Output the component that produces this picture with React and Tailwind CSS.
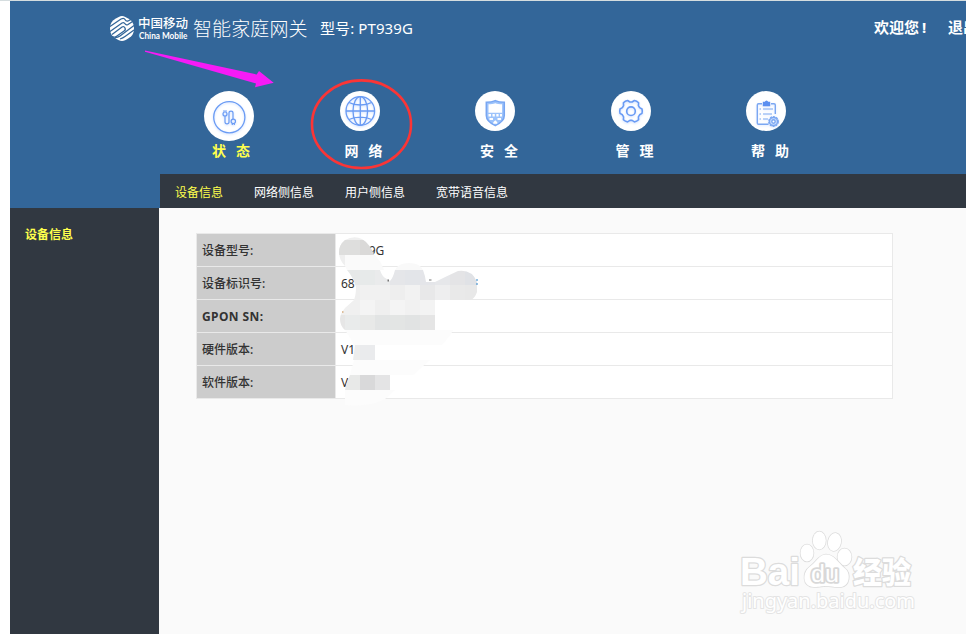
const menus = [
  { name: '状态', icon: CableIcon, active: true },
  { name: '网络', icon: GlobeIcon },
  { name: '安全', icon: ShieldIcon },
  { name: '管理', icon: GearIcon },
  { name: '帮助', icon: ClipboardIcon },
];

const tabs = ['设备信息', '网络侧信息', '用户侧信息', '宽带语音信息'];

const rows = [
  { label: '设备型号:', value: 'PT939G' },
  { label: '设备标识号:', value: '68' },
  { label: 'GPON SN:', value: '' },
  { label: '硬件版本:', value: 'V1' },
  { label: '软件版本:', value: 'V' },
];

// x, y, width, height, colour of each block, relative to the table
const blocks = [
  [148, 36, 15, 15, '#e6e8e8'], [163, 36, 15, 15, '#e7eaea'], [178, 36, 15, 15, '#eaebec'], [193, 36, 15, 15, '#e5e6e9'],
  [208, 36, 15, 15, '#e3e5e9'], [223, 36, 15, 15, '#e4e5e9'], [238, 36, 15, 15, '#e6e7ea'],
  [253, 36, 15, 15, '#e4e4e6'], [268, 36, 15, 15, '#e0e2e6'],
  [148, 51, 15, 15, '#eeeeee'], [163, 51, 30, 15, '#f1f1f1'], [193, 51, 15, 15, '#eeeeee'],
  [208, 51, 15, 15, '#f2f2f2'], [223, 51, 15, 15, '#e8e8e9'], [238, 51, 15, 15, '#eeeeef'],
  [253, 51, 15, 15, '#e9e9e9'], [268, 51, 15, 15, '#e8e8e8'],
  [142, 66, 21, 15, '#f0f0f0'], [163, 66, 15, 15, '#f4f4f4'], [178, 66, 15, 15, '#efefef'],
  [193, 66, 15, 15, '#f4f4f4'], [208, 66, 15, 15, '#f1f1f1'], [223, 66, 15, 15, '#f3f3f3'],
  [142, 81, 6, 15, '#e6e6e6'], [148, 81, 15, 15, '#e9ebeb'], [163, 81, 15, 15, '#e8e9e8'], [178, 81, 15, 15, '#e2e4e4'],
  [193, 81, 15, 15, '#e3e5e4'], [208, 81, 15, 15, '#e1e3e3'], [223, 81, 15, 15, '#e5e5e5'],
];

function CableIcon() {
  return (
    <svg viewBox="0 0 50 50" className="size-[50px] drop-shadow-[0_1px_1px_#cfe0ff]" fill="none" stroke="#6a9bf4">
      <circle cx="25.3" cy="26.3" r="15.6" strokeWidth="1.3" />
      <g strokeWidth="1.2">
        <circle cx="21" cy="23" r="2" />
        <path d="M20 20.8v-1.500M22 20.800v-1.500M21 25v6c0 2.500 4 2.500 4 0v-9c0-2.500 4-2.500 4 0v6M28.300 34v-1.500M30.300 34v-1.500" />
        <circle cx="29.300" cy="30.300" r="2.200" />
      </g>
    </svg>
  );
}

function GlobeIcon() {
  return (
    <svg viewBox="0 0 40 40" className="size-10 drop-shadow-[0_1px_1px_#cfe0ff]" fill="none" stroke="#6a9bf4" strokeWidth="1.3">
      <circle cx="20.3" cy="20" r="14.3" />
      <ellipse cx="20.3" cy="20" rx="7.3" ry="14.3" />
      <path d="M20.300 5.700v28.600M6 20h28.600M9 11.500c6 3.300 16.600 3.300 22.600 0M9 28.500c6-3.300 16.600-3.300 22.600 0" />
    </svg>
  );
}

function ShieldIcon() {
  return (
    <svg viewBox="0 0 40 40" className="size-10" fill="none" stroke="#78a6f2">
      <path d="M20.300 9.600c-2.500 1.200-5.500 1.700-9 1.700v13.300c0 5 4.500 8 9 10 4.500-2 9-5 9-10V11.300c-3.500 0-6.500-.5-9-1.700z" fill="#9dc3fb" strokeWidth="1.500" />
      <path d="M13.500 13.300c2.700 0 4.900-.3 6.800-1 1.900.7 4.100 1 6.800 1v8.500H13.500z" fill="#fff" stroke="none" />
      <path d="M13.500 23h2.500v2.500h-2.500zM17.500 23h2.300v2.500h-2.300zM21.300 23h2.300v2.500h-2.300zM25 23h2v2.500h-2zM14.500 27h3.500v2h-3.500zM22.500 27h3.500v2h-3.500zM18.300 31.300l2-2 2 2v1.400h-4z" fill="#fff" stroke="none" />
    </svg>
  );
}

function GearIcon() {
  return (
    <svg viewBox="0 0 40 40" className="size-10 drop-shadow-[0_1px_1px_#cfe0ff]" fill="none" stroke="#6a9bf4" strokeWidth="1.600" strokeLinejoin="round">
      <path d="M31 18q.6 2.200 0 4.400L28.600 23.800 27.400 25.800 27.600 28.700q-1.800 1.800-4.200 2.200L21.100 29.400H18.900L16.600 30.900q-2.400-.4-4.200-2.200L12.600 25.800 11.400 23.800 9 22.400q-.6-2.200 0-4.400L11.400 16.600 12.600 14.600 12.400 11.700q1.800-1.800 4.200-2.200L18.900 11h2.200L23.400 9.500q2.400.4 4.200 2.200L27.400 14.600 28.600 16.600z" />
      <circle cx="20" cy="20.200" r="4.300" />
    </svg>
  );
}

function ClipboardIcon() {
  return (
    <svg viewBox="0 0 40 40" className="size-10 drop-shadow-[0_1px_1px_#dfe9ff]" fill="none" stroke="#7ba7f2" strokeWidth="1.400">
      <path d="M16 12.800h-3.500q-1.200 0-1.200 1.200v18q0 1.200 1.200 1.200h10M25 12.800h3q1.300 0 1.300 1.200v9" />
      <path d="M17.500 14.500v-3h1.700q1.300-2.500 2.600 0h1.700v3z" fill="#5b8ff0" stroke="#5b8ff0" />
      <path d="M13.500 18h1.500M17 18h10M13.500 23h1.500M17 23h9M13.500 28h1.500M17 28h5" strokeWidth="1.200" />
      <circle cx="27.500" cy="30.500" r="4.700" strokeDasharray="2.200 .8" />
      <circle cx="27.500" cy="30.500" r="4" fill="#cfe0fd" />
      <circle cx="27.500" cy="30.500" r="1.700" fill="#fff" />
    </svg>
  );
}

function MobileLogo() {
  return (
    <svg viewBox="0 0 200 30" className="h-[30px] w-[200px] shrink-0">
      <path d="M13 2q3 0 9 4.500 3 3 3 8t-3 8q-6 4.500-9 4.500t-9-4.500q-3-3-3-8t3-8q6-4.500 9-4.500z" fill="#fff" />
      <g fill="none" stroke="#336699" strokeWidth="1.300">
        <path d="M1 12.500l11-7.500q3-1.500 4 .5t3 1.500l4-2" />
        <path d="M1 17.500l12-8.500q2-1 3 .8t3 .7l5-3.300" />
        <path d="M3 20.500l10-7.500q2-1 3 1t-1 3l-7 5q-2 1.800-5 .5" />
        <path d="M25 11.500l-8 6q-4 3-6 4.500t-5 1.500" />
        <path d="M25 16l-9 6.500q-2 1.500-5 2.500" />
      </g>
      <g fill="#fff" className="font-['Noto_Sans_CJK_SC',sans-serif]">
        <text x="29" y="14" fontSize="12.500" fontWeight="500" textLength="50">中国移动</text>
        <text x="30" y="24.500" fontSize="9.500" fontWeight="700" textLength="48.500" lengthAdjust="spacingAndGlyphs" className="font-['Lato',sans-serif]">China Mobile</text>
        <text x="84" y="22" fontSize="19" fontWeight="300" textLength="114.500">智能家庭网关</text>
      </g>
    </svg>
  );
}

function Mosaic() {
  return (
    <svg viewBox="0 0 300 175" className="absolute top-0 left-0 h-[175px] w-[300px]">
      <defs>
        <clipPath id="smear">
          <path d="M150 36h33q2 7 7 9l3 2q3-3 5-11h28q2 5 3 12h9q12-6 23-11 14-2 19 11v10q-2 6-6 8h-36v30h-90q-5-4-5-11 0-5 5-11l9-8q2-5 2-13-3-10-9-17z" />
        </clipPath>
        <clipPath id="blob">
          <path d="M142 18q0-7 6-12 9-5 17-1 8 5 12 16h-29v11q-6-6-6-14z" />
        </clipPath>
      </defs>
      <g clipPath="url(#blob)">
        <path d="M140 0h40v35h-40z" fill="#efefef" />
        <path d="M142 6h21v15h-21z" fill="#dededd" />
        <path d="M163 6h15v15h-15z" fill="#dad9d8" />
      </g>
      <path d="M148 21h30l6 8 3 7h-37l-2-4z" fill="#fafafa" />
      <path d="M198 36q3-7 14-7 11 0 14 7z" fill="#f9f9f9" />
      <g clipPath="url(#smear)">
        {blocks.map(([x, y, w, h, color]) => (
          <rect key={`${x}-${y}`} x={x} y={y} width={w} height={h} fill={color} />
        ))}
      </g>
      <path d="M148 96h108l-2 4-9 11h-67v15h55l-17 15h-23v15h5l-10 9q-15 8-40 6v-15l5-15 4-15v-15l-3-6z" fill="#fcfcfc" />
      <path d="M158 111h5v15h-7z" fill="#ededed" />
      <path d="M163 111h15v15h-15z" fill="#eaebed" />
      <path d="M153 141h10v15h-15q1-7 5-15z" fill="#e8e9e8" />
      <path d="M163 141h15v15h-15z" fill="#d9d9da" />
      <path d="M178 141h15v15h-15z" fill="#e4e4e5" />
      <path d="M190.500 45.500h1.500v2h-1.500zM232 45.500h2.500v1h-2.500z" fill="#777" />
      <path d="M279.500 45h1v2h-1zM279.500 49h1v2h-1z" fill="#2f86cc" />
      <path d="M145 77.500h1.500v1H145z" fill="#c98a45" />
    </svg>
  );
}

function Watermark() {
  return (
    <svg viewBox="0 0 190 100" className="absolute top-[524px] left-[735px] h-[100px] w-[190px]" fill="#fff" stroke="#dcdcdc" strokeWidth="1.500" strokeLinejoin="round" paintOrder="stroke">
      <text x="5" y="60" fontSize="39" fontWeight="700" textLength="60" lengthAdjust="spacingAndGlyphs" strokeWidth="2.500" className="font-['Liberation_Sans',sans-serif]">Bai</text>
      <ellipse cx="72" cy="28" rx="6.500" ry="8.500" />
      <ellipse cx="84.300" cy="15.500" rx="6.500" ry="9" />
      <ellipse cx="99.500" cy="17" rx="6.500" ry="9" transform="rotate(12 99.500 17)" />
      <ellipse cx="109.500" cy="32" rx="7" ry="8.500" />
      <path d="M91 29.500c-7 0-10 8-16 12-8 6-8 20 4 20.500 6 0 8-1 12-1s9 1.500 15 1c9-1 10-14 4-18.500-7-6-11-14-19-14z" />
      <text x="76" y="57" fontSize="23" textLength="28" lengthAdjust="spacingAndGlyphs" strokeWidth="3.500" stroke="#d8d8d8" className="font-['Liberation_Sans',sans-serif]">du</text>
      <text x="118" y="57.500" fontSize="30" fontWeight="900" textLength="58" lengthAdjust="spacingAndGlyphs" strokeWidth="2.500" className="font-['Noto_Sans_CJK_SC',sans-serif]">经验</text>
      <text x="7" y="83" fontSize="20" textLength="173" lengthAdjust="spacingAndGlyphs" strokeWidth="2" stroke="#e4e4e4" className="font-['Noto_Sans',sans-serif]">jingyan.baidu.com</text>
    </svg>
  );
}

export default function App() {
  return (
    <div className="relative flex h-[634px] w-[966px] flex-col overflow-hidden border-t border-[#d5dddf] bg-white pl-[10px] font-['Noto_Sans','Noto_Sans_CJK_SC',sans-serif] text-xs text-[#333]">
      <header className="h-[207px] shrink-0 bg-[#336699] text-white">
        <div className="flex h-[90px] items-start pt-[13px] pl-[99px]">
          <MobileLogo />
          <span className="ml-[11px] pt-0.5 text-[15px] leading-6 tracking-[0.1px] whitespace-nowrap">型号: PT939G</span>
          <div className="ml-auto flex w-[92px] gap-[21px] pt-px text-[15px] leading-6 font-bold whitespace-nowrap">
            <span className="w-[53px] shrink-0">
              欢迎您<span className="ml-[3px]">!</span>
            </span>
            <span>退出</span>
          </div>
        </div>
        <nav className="flex h-[83px] pl-[194px]">
          {menus.map(({ name, icon: Icon, active }) => (
            <a key={name} className={`flex w-[135.5px] shrink-0 flex-col items-start ${active ? 'text-[#ffff4d]' : ''}`}>
              <span className="rounded-full bg-white">
                <Icon />
              </span>
              <span className={`text-sm leading-5 font-bold tracking-[10px] ${active ? 'ml-2' : 'mt-[10px] ml-[5px]'}`}>{name}</span>
            </a>
          ))}
        </nav>
        <div className="ml-[150px] flex h-[34px] items-center gap-[31px] bg-[#313841] pt-[3px] pl-[15px]">
          {tabs.map((tab, i) => (
            <a key={tab} className={i === 0 ? 'text-[#ffff4d]' : ''}>{tab}</a>
          ))}
        </div>
      </header>
      <div className="flex flex-1">
        <aside className="w-[149px] bg-[#313841] pt-[19px] pl-[15px] leading-4 font-bold text-[#ffff4d]">设备信息</aside>
        <main className="flex-1 bg-[#fafafa] pt-[25px] pl-[37px]">
          <div className="relative w-[697px] border border-[#e9e9e9] bg-white">
            {rows.map(({ label, value }) => (
              <div key={label} className="flex h-[33px] items-center border-b border-[#e9e9e9] last-of-type:h-8 last-of-type:border-b-0">
                <span className={`flex h-full w-[139px] items-center border-r border-[#e9e9e9] bg-[#ccc] pt-0.5 pl-[5px] ${label.startsWith('GPON') ? 'font-bold tracking-[0.4px]' : 'font-medium'}`}>
                  {label}
                </span>
                <span className="pt-0.5 pl-[5px]">{value}</span>
              </div>
            ))}
            <Mosaic />
          </div>
        </main>
      </div>
      <svg viewBox="0 0 966 220" className="pointer-events-none absolute -top-px left-0 h-[220px] w-[966px]">
        <path d="M145 50.500v1.200L256 83.500l-1 3.800 18.700-4.600L259 71l-2.300 3.500z" fill="#f61bf6" />
        <ellipse cx="361.500" cy="124.200" rx="49.500" ry="43.800" fill="none" stroke="#fb3536" strokeWidth="2.600" />
      </svg>
      <Watermark />
    </div>
  );
}
